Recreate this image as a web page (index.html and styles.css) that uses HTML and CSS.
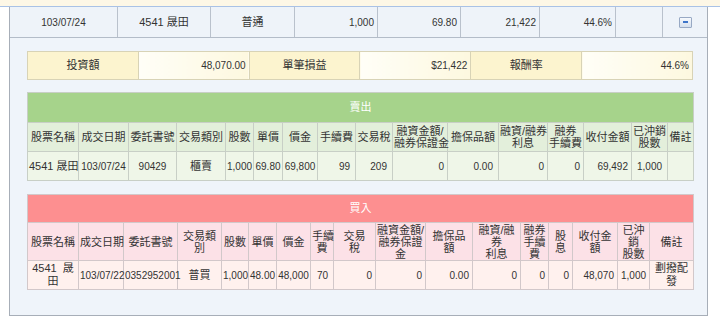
FILE: index.html
```html
<!DOCTYPE html>
<html lang="zh-Hant">
<head>
<meta charset="utf-8">
<title>交易明細</title>
<link rel="stylesheet" href="styles.css">
</head>
<body>
<div class="topstrip"></div>
<div class="panel">
  <div class="summary">
    <div class="c n">103/07/24</div>
    <div class="c">4541 晟田</div>
    <div class="c">普通</div>
    <div class="c n r">1,000</div>
    <div class="c n r">69.80</div>
    <div class="c n r">21,422</div>
    <div class="c n r">44.6%</div>
    <div class="c"></div>
    <div class="c last"><span class="collapse"><span class="bar"></span></span></div>
  </div>
  <div class="detail">
    <table class="invest">
      <tr>
        <td class="lbl">投資額</td>
        <td class="val n">48,070.00</td>
        <td class="lbl">單筆損益</td>
        <td class="val n">$21,422</td>
        <td class="lbl">報酬率</td>
        <td class="val n">44.6%</td>
      </tr>
    </table>

    <table class="trade sell">
      <colgroup>
        <col><col><col><col><col><col><col><col><col><col><col><col><col><col><col><col>
      </colgroup>
      <tr class="title"><th colspan="16">賣出</th></tr>
      <tr class="head">
        <th>股票名稱</th><th>成交日期</th><th>委託書號</th><th>交易類別</th><th>股數</th><th>單價</th><th>價金</th><th>手續費</th><th>交易稅</th><th>融資金額/<br>融券保證金</th><th>擔保品額</th><th>融資/融券<br>利息</th><th>融券<br>手續費</th><th>收付金額</th><th>已沖銷<br>股數</th><th>備註</th>
      </tr>
      <tr class="data">
        <td>4541 晟田</td><td class="n">103/07/24</td><td class="n">90429</td><td>櫃賣</td><td class="n">1,000</td><td class="n">69.80</td><td class="n">69,800</td><td class="n r p5">99</td><td class="n r p5">209</td><td class="n r">0</td><td class="n r p5">0.00</td><td class="n r">0</td><td class="n r">0</td><td class="n r">69,492</td><td class="n">1,000</td><td></td>
      </tr>
    </table>

    <table class="trade buy">
      <colgroup>
        <col><col><col><col><col><col><col><col><col><col><col><col><col><col><col><col><col>
      </colgroup>
      <tr class="title"><th colspan="17">買入</th></tr>
      <tr class="head">
        <th>股票名稱</th><th>成交日期</th><th>委託書號</th><th>交易類<br>別</th><th>股數</th><th>單價</th><th>價金</th><th>手續<br>費</th><th>交易<br>稅</th><th>融資金額/<br>融券保證<br>金</th><th>擔保品<br>額</th><th>融資/融<br>券<br>利息</th><th>融券<br>手續<br>費</th><th>股<br>息</th><th>收付金<br>額</th><th>已沖<br>銷<br>股數</th><th>備註</th>
      </tr>
      <tr class="data">
        <td>4541&nbsp; 晟<br>田</td><td class="n">103/07/22</td><td class="n">0352952001</td><td>普買</td><td class="n">1,000</td><td class="n">48.00</td><td class="n">48,000</td><td class="n r p5">70</td><td class="n r">0</td><td class="n r">0</td><td class="n r">0.00</td><td class="n r">0</td><td class="n r">0</td><td class="n r">0</td><td class="n r">48,070</td><td class="n">1,000</td><td>劃撥配<br>發</td>
      </tr>
    </table>
  </div>
</div>
</body>
</html>
```

FILE: styles.css
```css
* { box-sizing: border-box; }

body {
  margin: 0;
  background: #ffffff;
  font-family: "Liberation Sans", "Noto Sans CJK TC", sans-serif;
  font-size: 11px;
  color: #333333;
}

.n { font-size: 10px; }

.topstrip {
  height: 7px;
  background: #fdf7e6;
  border-bottom: 1px solid #a9c2e6;
}

.panel {
  margin-left: 9px;
  width: 699px;
  border: 1px solid #a7aeb8;
  border-top: 0;
  background: #eff4fa;
  padding-bottom: 25px;
}

.summary {
  display: grid;
  grid-template-columns: 108px 93px 84px 83px 83px 79px 76px 47px 1fr;
  height: 31px;
  border-bottom: 1px solid #b3bcc8;
  background: #eef3f9;
}

.summary .c {
  display: flex;
  align-items: center;
  justify-content: center;
  padding: 0 3px;
  border-right: 1px solid #b9c1cc;
  line-height: 13px;
}

.summary .c.r { justify-content: flex-end; }
.summary .c.last { border-right: 0; }

.collapse {
  display: flex;
  align-items: center;
  justify-content: center;
  width: 13px;
  height: 11px;
  border: 1px solid #98a9c4;
  border-radius: 1px;
  background: linear-gradient(#f6f9fd, #d5dfed);
}

.collapse .bar {
  width: 5px;
  height: 2px;
  background: #3d74c9;
}

.detail {
  padding: 13px 0 0 17px;
}

table {
  border-collapse: collapse;
  table-layout: fixed;
  width: 666px;
}

td, th {
  padding: 0 1px;
  font-weight: normal;
  text-align: center;
  vertical-align: middle;
  white-space: nowrap;
  line-height: 13px;
}

.invest td {
  height: 28px;
  border: 1px solid #d8d3b6;
}

.invest .lbl {
  background: #fcf4cf;
  font-size: 11px;
}

.invest .val {
  text-align: right;
  padding-right: 3px;
  background: linear-gradient(to right, #fffef7, #fdf8df);
}

.trade { margin-top: 12px; }
.trade.buy { margin-top: 13px; }

.trade td, .trade th { border: 1px solid #c8cfc6; }
.trade .r { text-align: right; padding-right: 3px; }
.trade .r.p5 { padding-right: 5px; }

.sell .title th {
  height: 30px;
  background: #a6d38b;
  color: #ffffff;
}
.sell .head th {
  height: 29px;
  background: #e3efdb;
  line-height: 12.5px;
}
.sell .data td {
  height: 29px;
  background: #eff6e8;
}

.buy td, .buy th { border-color: #d2c8ca; }
.buy .title th {
  height: 28px;
  background: #fd8f90;
  color: #ffffff;
}
.buy .head th {
  height: 38px;
  background: #fce1e7;
  line-height: 12px;
}
.buy .data td {
  height: 29px;
  background: #fff1ee;
  line-height: 13px;
}

.sell col:nth-child(1) { width: 51px; }
.sell col:nth-child(2) { width: 50px; }
.sell col:nth-child(3) { width: 48px; }
.sell col:nth-child(4) { width: 49px; }
.sell col:nth-child(5) { width: 28px; }
.sell col:nth-child(6) { width: 29px; }
.sell col:nth-child(7) { width: 35px; }
.sell col:nth-child(8) { width: 38px; }
.sell col:nth-child(9) { width: 37px; }
.sell col:nth-child(10) { width: 55px; }
.sell col:nth-child(11) { width: 51px; }
.sell col:nth-child(12) { width: 49px; }
.sell col:nth-child(13) { width: 36px; }
.sell col:nth-child(14) { width: 48px; }
.sell col:nth-child(15) { width: 36px; }
.sell col:nth-child(16) { width: 26px; }

.buy col:nth-child(1) { width: 51px; }
.buy col:nth-child(2) { width: 45px; }
.buy col:nth-child(3) { width: 54px; }
.buy col:nth-child(4) { width: 44px; }
.buy col:nth-child(5) { width: 27px; }
.buy col:nth-child(6) { width: 28px; }
.buy col:nth-child(7) { width: 34px; }
.buy col:nth-child(8) { width: 23px; }
.buy col:nth-child(9) { width: 42px; }
.buy col:nth-child(10) { width: 50px; }
.buy col:nth-child(11) { width: 47px; }
.buy col:nth-child(12) { width: 48px; }
.buy col:nth-child(13) { width: 28px; }
.buy col:nth-child(14) { width: 24px; }
.buy col:nth-child(15) { width: 45px; }
.buy col:nth-child(16) { width: 32px; }
.buy col:nth-child(17) { width: 44px; }
```
